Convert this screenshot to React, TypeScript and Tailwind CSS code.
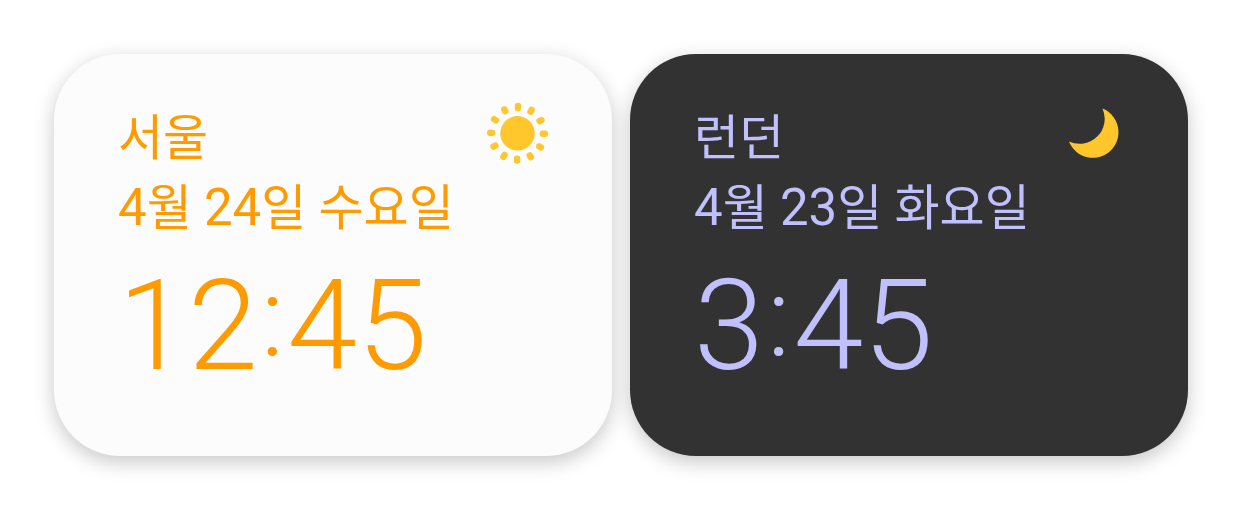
type CityClock = {
  city: string;
  date: string;
  hour: string;
  minute: string;
  day: boolean;
};

const clocks: CityClock[] = [
  { city: '서울', date: '4월 24일 수요일', hour: '12', minute: '45', day: true },
  { city: '런던', date: '4월 23일 화요일', hour: '3', minute: '45', day: false },
];

const rays = [1, 31, 61, 91, 121, 151, 181, 211, 241, 271, 301, 331];

function SunIcon() {
  return (
    <svg viewBox="0 0 64 64" className="size-16 shrink-0" fill="#ffc72c" aria-hidden="true">
      <g transform="translate(33.5 31.3)">
        <circle r="17.2" />
        {rays.map((angle) => (
          <rect key={angle} x="-3.2" y="-30.5" width="6.4" height="8.4" rx="3" transform={`rotate(${angle})`} />
        ))}
      </g>
    </svg>
  );
}

function MoonIcon() {
  return (
    <svg viewBox="0 0 64 64" className="size-16 shrink-0" fill="#ffc72c" aria-hidden="true">
      <path d="M42.5 6.5A25.6 25.6 0 1 1 9 39.500A25.100 25.100 0 0 0 42.500 6.500Z" />
    </svg>
  );
}

function DateText({ text }: { text: string }) {
  return (
    <p className="whitespace-nowrap">
      {text.split(/(\d+)/).map((part, i) =>
        /^\d+$/.test(part) ? (
          <span key={i} className="text-[51px] leading-none">
            {part}
          </span>
        ) : (
          part
        ),
      )}
    </p>
  );
}

function ClockCard({ city, date, hour, minute, day }: CityClock) {
  return (
    <article
      className={`flex-1 rounded-[66px] px-16 pt-12 pb-[55px] shadow-[0_6px_20px_rgba(0,0,0,0.22)] ${
        day ? 'bg-[#fcfcfc] text-[#ff9b00]' : 'bg-[#323232] text-[#c0c0ff]'
      }`}
    >
      <header className="mb-[7px] flex items-start justify-between">
        <div className="pt-0.5 text-[49px] leading-[70px]">
          <h2>{city}</h2>
          <DateText text={date} />
        </div>
        {day ? <SunIcon /> : <MoonIcon />}
      </header>
      <time className="block text-[126px] leading-[150px] font-light">
        {hour}
        <span className="mx-[3px] align-[13px] text-[112px] leading-none">:</span>
        {minute}
      </time>
    </article>
  );
}

export default function App() {
  return (
    <main className="flex gap-[18px] bg-white p-[54px] font-['Roboto','Noto_Sans_CJK_KR',sans-serif]">
      {clocks.map((clock) => (
        <ClockCard key={clock.city} {...clock} />
      ))}
    </main>
  );
}
